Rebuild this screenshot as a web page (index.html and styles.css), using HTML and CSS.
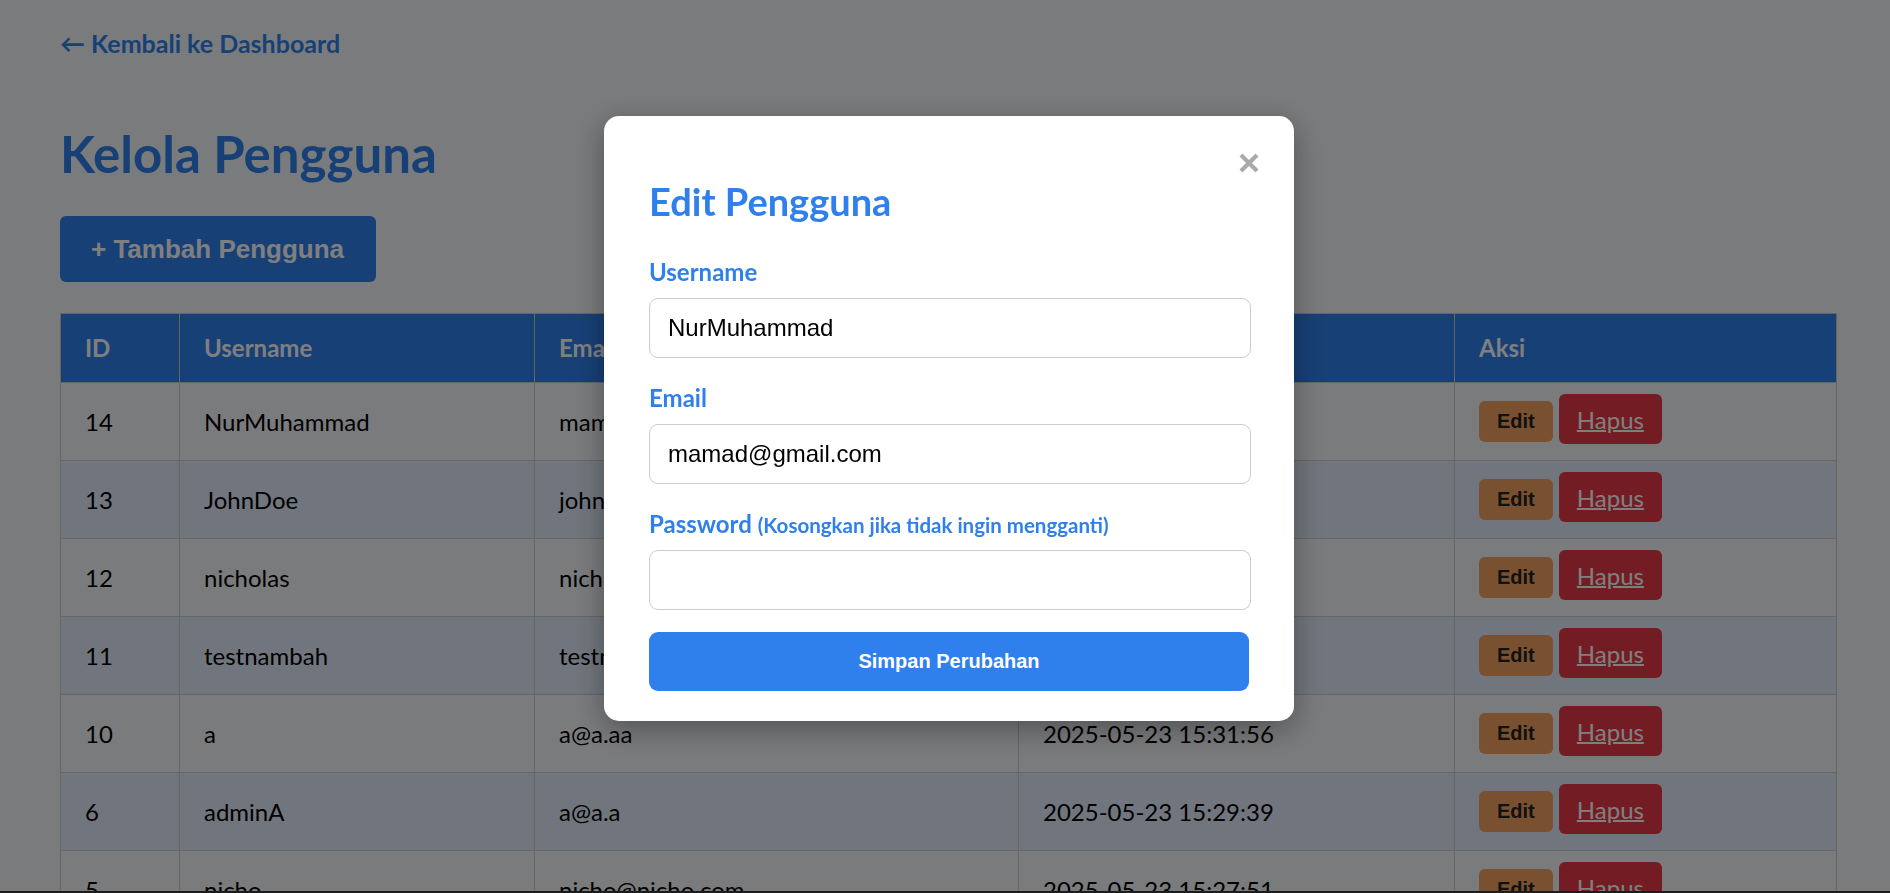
FILE: index.html
```html
<!DOCTYPE html>
<html lang="id">
<head>
<meta charset="utf-8">
<title>Kelola Pengguna</title>
<link rel="stylesheet" href="styles.css">
</head>
<body>
<div class="page">
  <a class="back" href="#">← Kembali ke Dashboard</a>
  <h1 class="title">Kelola Pengguna</h1>
  <div class="toolbar">
    <button class="btn-add" type="button">+ Tambah Pengguna</button>
  </div>
  <table class="users">
    <thead>
      <tr>
        <th class="c-id">ID</th>
        <th class="c-user">Username</th>
        <th class="c-mail">Email</th>
        <th class="c-date">Dibuat Pada</th>
        <th class="c-act">Aksi</th>
      </tr>
    </thead>
    <tbody>
      <tr><td>14</td><td>NurMuhammad</td><td>mamad@gmail.com</td><td>2025-05-24 10:12:03</td><td><button class="btn-edit" type="button">Edit</button><a class="btn-del" href="#">Hapus</a></td></tr>
      <tr><td>13</td><td>JohnDoe</td><td>johndoe@gmail.com</td><td>2025-05-24 09:45:18</td><td><button class="btn-edit" type="button">Edit</button><a class="btn-del" href="#">Hapus</a></td></tr>
      <tr><td>12</td><td>nicholas</td><td>nicholas@gmail.com</td><td>2025-05-23 16:02:44</td><td><button class="btn-edit" type="button">Edit</button><a class="btn-del" href="#">Hapus</a></td></tr>
      <tr><td>11</td><td>testnambah</td><td>testnambah@gmail.com</td><td>2025-05-23 15:40:10</td><td><button class="btn-edit" type="button">Edit</button><a class="btn-del" href="#">Hapus</a></td></tr>
      <tr><td>10</td><td>a</td><td>a@a.aa</td><td>2025-05-23 15:31:56</td><td><button class="btn-edit" type="button">Edit</button><a class="btn-del" href="#">Hapus</a></td></tr>
      <tr><td>6</td><td>adminA</td><td>a@a.a</td><td>2025-05-23 15:29:39</td><td><button class="btn-edit" type="button">Edit</button><a class="btn-del" href="#">Hapus</a></td></tr>
      <tr><td>5</td><td>nicho</td><td>nicho@nicho.com</td><td>2025-05-23 15:27:51</td><td><button class="btn-edit" type="button">Edit</button><a class="btn-del" href="#">Hapus</a></td></tr>
    </tbody>
  </table>
</div>

<div class="overlay">
  <div class="modal">
    <button class="close" type="button" aria-label="Tutup">
      <svg width="20" height="20" viewBox="0 0 20 20"><path d="M2 2L18 18M18 2L2 18" stroke="#aaaaaa" stroke-width="4.2" fill="none"/></svg>
    </button>
    <h2 class="modal-title">Edit Pengguna</h2>
    <form class="form">
      <label class="label" for="u">Username</label>
      <input class="input" id="u" type="text" value="NurMuhammad">
      <label class="label" for="e">Email</label>
      <input class="input" id="e" type="email" value="mamad@gmail.com">
      <label class="label" for="p">Password <span class="hint">(Kosongkan jika tidak ingin mengganti)</span></label>
      <input class="input" id="p" type="password" value="">
      <button class="btn-save" type="button">Simpan Perubahan</button>
    </form>
  </div>
</div>
</body>
</html>
```

FILE: styles.css
```css
html, body {
  margin: 0;
  padding: 0;
}

body {
  background: #f5f7fa;
  font-family: Lato, "Open Sans", sans-serif;
  color: #000;
  overflow: hidden;
  height: 893px;
}

.page {
  padding: 27px 54px 0 60px;
}

.back {
  display: inline-block;
  font-size: 25px;
  line-height: 32px;
  font-weight: 700;
  color: #2f80ed;
  text-decoration: none;
}

.title {
  margin: 63px 0 30px;
  font-size: 51px;
  line-height: 64px;
  font-weight: 700;
  color: #2f80ed;
}

.toolbar {
  display: flex;
}

.btn-add {
  border: none;
  border-radius: 6px;
  background: #2f80ed;
  color: #fff;
  font-family: "Liberation Sans", Arial, sans-serif;
  font-weight: 700;
  font-size: 26px;
  line-height: 30px;
  padding: 18px 32px 18px 31px;
}

.users {
  margin-top: 31px;
  width: 1776px;
  border-collapse: collapse;
  table-layout: fixed;
  font-size: 24px;
  line-height: 32px;
}

.users th,
.users td {
  border: 1px solid #cccccc;
  padding: 18px 24px;
  text-align: left;
  white-space: nowrap;
  overflow: hidden;
}

.users th {
  background: #2f80ed;
  color: #fff;
  font-weight: 700;
}

.c-id { width: 70px; }
.c-user { width: 306px; }
.c-mail { width: 435px; }
.c-date { width: 387px; }
.c-act { width: 333px; }

.users tbody tr:nth-child(even) td {
  background: #e3edfc;
}

.btn-edit {
  border: none;
  border-radius: 6px;
  background: #f4a261;
  color: #222;
  font-family: "Liberation Sans", Arial, sans-serif;
  font-weight: 700;
  font-size: 20px;
  line-height: 23px;
  padding: 9px 18px;
  vertical-align: baseline;
}

.btn-del {
  margin-left: 6px;
  padding: 10.5px 18px;
  border-radius: 6px;
  background: #e63946;
  color: #fff;
  text-decoration: underline;
  font-size: 24px;
}

.overlay {
  position: fixed;
  inset: 0;
  background: rgba(0, 0, 0, 0.5);
  box-shadow: inset 0 -2px 0 #1c1c1c;
}

.modal {
  position: absolute;
  left: 604px;
  top: 116px;
  width: 690px;
  box-sizing: border-box;
  padding: 0 43px 30px 45px;
  background: #fff;
  border-radius: 15px;
  box-shadow: 0 8px 30px rgba(0, 0, 0, 0.35);
}

.close {
  position: absolute;
  top: 37px;
  right: 35px;
  width: 20px;
  height: 20px;
  padding: 0;
  border: none;
  background: transparent;
  display: flex;
}

.modal-title {
  margin: 61px 0 29px;
  font-size: 38px;
  line-height: 48px;
  font-weight: 700;
  color: #2f80ed;
}

.form {
  display: flex;
  flex-direction: column;
}

.label {
  font-size: 24px;
  line-height: 32px;
  font-weight: 700;
  color: #2f80ed;
  padding-top: 2px;
  margin-bottom: 10px;
}

.hint {
  font-size: 20.5px;
  line-height: 20px;
  font-weight: 700;
}

.input {
  box-sizing: border-box;
  height: 60px;
  width: 100%;
  margin: 0 0 22px;
  padding: 0 18px;
  border: 1px solid #cccccc;
  border-radius: 9px;
  font-family: "Liberation Sans", Arial, sans-serif;
  font-size: 24px;
  color: #000;
  background: #fff;
}

.btn-save {
  height: 59px;
  width: 600px;
  border: none;
  border-radius: 9px;
  background: #2f80ed;
  color: #fff;
  font-family: "Liberation Sans", Arial, sans-serif;
  font-weight: 700;
  font-size: 20px;
}
```
